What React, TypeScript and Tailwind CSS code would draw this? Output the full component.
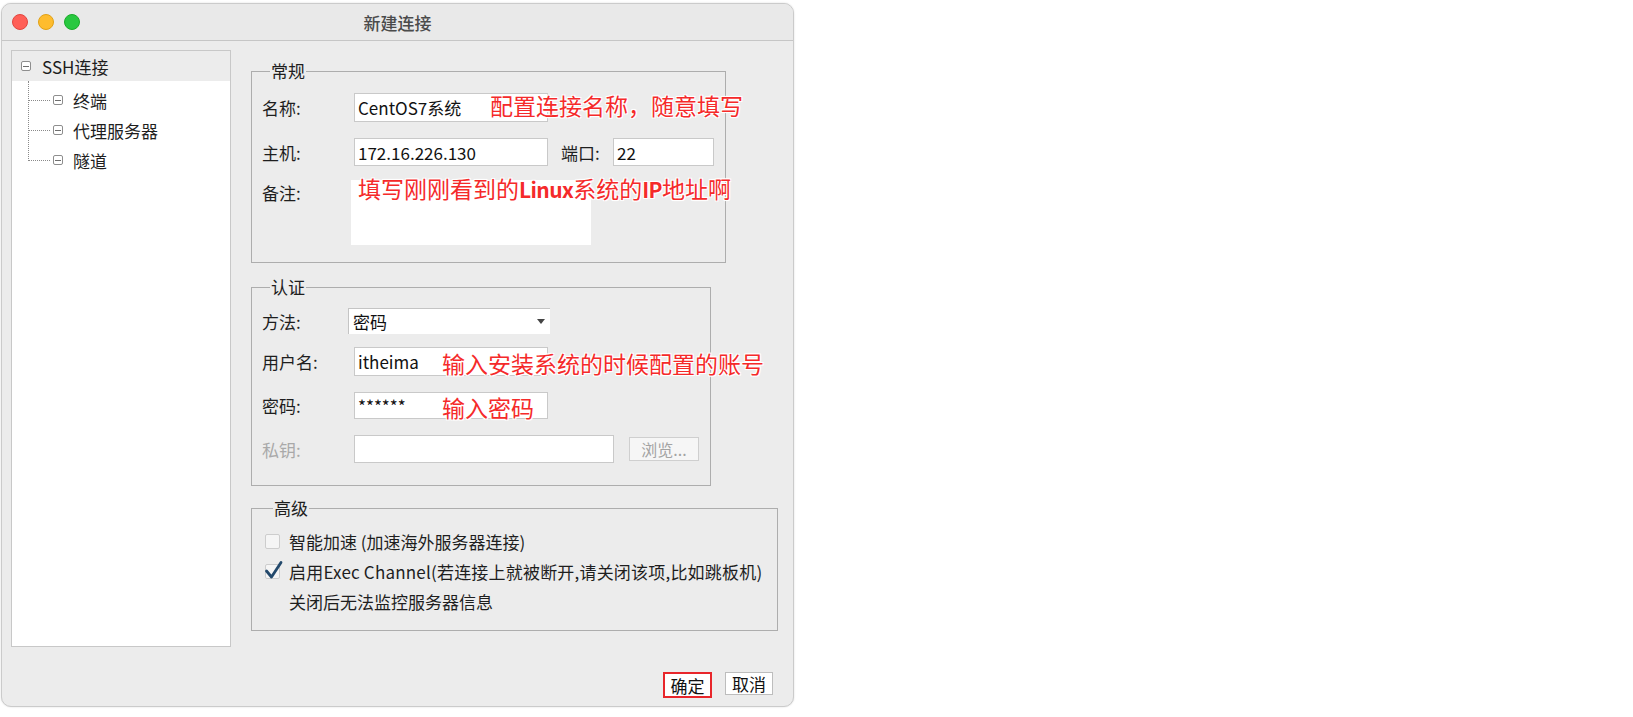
import React from 'react';

const font = "font-['Noto_Sans_CJK_SC',sans-serif]";

// red callouts written over the dialog
const note = "absolute whitespace-nowrap text-[23px] leading-[28px] text-[#f52a2a] [text-shadow:-1px_-1px_0_#fff,1px_-1px_0_#fff,-1px_1px_0_#fff,1px_1px_0_#fff,0_0_3px_#fff]";
const noteLatin = "text-[21px] font-bold tracking-[-0.6px]";

function TreeBox() {
  return (
    <span className="flex h-[10px] w-[10px] shrink-0 items-center justify-center rounded-[2px] border border-[#8e8e8e] bg-white">
      <span className="h-px w-[6px] bg-[#6e6e6e]" />
    </span>
  );
}

function TreeChild({ label }: { label: string }) {
  return (
    <div className="flex h-[30px] items-center pl-[16px]">
      <span className="w-[22px] border-t border-dotted border-[#8a8a8a]" />
      <span className="ml-[3px]">
        <TreeBox />
      </span>
      <span className="ml-[10px] text-[17px] leading-none text-[#1e1e1e]">{label}</span>
    </div>
  );
}

function Field({ value, width, height }: { value?: string; width: string; height: string }) {
  return (
    <div className={`${width} ${height} flex items-center border border-[#c9c9c9] bg-white pl-[3px] text-[17px] leading-none text-[#111]`}>
      {value}
    </div>
  );
}

function Label({ text, width = 'w-[92px]', muted }: { text: string; width?: string; muted?: boolean }) {
  return (
    <span className={`${width} shrink-0 text-[17px] leading-none ${muted ? 'text-[#a9a9a9]' : 'text-[#1e1e1e]'}`}>
      {text}
    </span>
  );
}

function Group({ title, width, children, className = '' }: { title: string; width: string; children: React.ReactNode; className?: string }) {
  return (
    <fieldset className={`${width} ${className} border border-[#adadad]`}>
      <legend className="ml-[8px] px-[1px] text-[17px] leading-[20px] text-[#1e1e1e]">{title}</legend>
      {children}
    </fieldset>
  );
}

function CheckBox({ checked }: { checked?: boolean }) {
  return (
    <span className="relative h-[15px] w-[15px] shrink-0 rounded-[2px] border border-[#cdcdcd] bg-[#f5f5f5]">
      {checked && (
        <svg className="absolute -left-[2px] -top-[5px]" width="20" height="20" viewBox="0 0 20 20">
          <path d="M2.5 11 L7.5 17 L17 2.5" fill="none" stroke="#23496c" strokeWidth="2.8" strokeLinecap="round" strokeLinejoin="round" />
        </svg>
      )}
    </span>
  );
}

export default function App() {
  return (
    <div className={`h-[717px] w-[1633px] bg-white pt-[3px] ${font}`}>
      <div className="relative ml-[1px] flex h-[704px] w-[793px] flex-col overflow-hidden rounded-[10px] border border-[#cbcbcb] bg-[#ececec] shadow-[0_0_2px_rgba(0,0,0,0.15)]">
        {/* title bar */}
        <div className="relative flex h-[37px] shrink-0 items-center justify-center border-b border-[#c6c6c6] bg-[#e9e9e9]">
          <div className="absolute left-[10px] top-[10px] flex gap-[10px]">
            <span className="h-[16px] w-[16px] rounded-full border border-[#e2463f] bg-[#ff5f57]" />
            <span className="h-[16px] w-[16px] rounded-full border border-[#e1a116] bg-[#febc2e]" />
            <span className="h-[16px] w-[16px] rounded-full border border-[#1aab29] bg-[#28c840]" />
          </div>
          <span className="text-[17px] font-medium leading-none text-[#4b4b4b]">新建连接</span>
        </div>

        {/* body */}
        <div className="flex pl-[9px] pt-[9px]">
          {/* tree */}
          <div className="h-[597px] w-[220px] shrink-0 border border-[#c8c8c8] bg-white">
            <div className="flex h-[30px] items-center bg-[#ececec] pl-[9px]">
              <TreeBox />
              <span className="ml-[11px] text-[17px] leading-none text-[#1e1e1e]">SSH连接</span>
            </div>
            <div className="relative pt-[4px]">
              <span className="absolute left-[16px] top-0 h-[80px] border-l border-dotted border-[#8a8a8a]" />
              <TreeChild label="终端" />
              <TreeChild label="代理服务器" />
              <TreeChild label="隧道" />
            </div>
          </div>

          {/* settings */}
          <div className="ml-[20px] mt-[11px] flex flex-col">
            <Group title="常规" width="w-[475px]" className="pb-[17px] pl-[10px]">
              <div className="mt-[12px] flex items-center">
                <Label text="名称:" />
                <Field value="CentOS7系统" width="w-[194px]" height="h-[29px]" />
              </div>
              <div className="mt-[16px] flex items-center">
                <Label text="主机:" />
                <Field value="172.16.226.130" width="w-[194px]" height="h-[28px]" />
                <span className="ml-[13px] w-[52px] text-[17px] leading-none text-[#1e1e1e]">端口:</span>
                <Field value="22" width="w-[101px]" height="h-[28px]" />
              </div>
              <div className="mt-[14px] flex items-start">
                <span className="w-[89px] pt-[4px] text-[17px] leading-none text-[#1e1e1e]">备注:</span>
                <div className="h-[65px] w-[240px] bg-white" />
              </div>
            </Group>

            <Group title="认证" width="w-[460px]" className="mt-[14px] pb-[22px] pl-[10px]">
              <div className="mt-[11px] flex items-center">
                <Label text="方法:" width="w-[86px]" />
                <div className="flex h-[26px] w-[202px] items-center justify-between border-l border-t border-[#c4c4c4] bg-white pl-[4px] pr-[5px] text-[17px] leading-none text-[#111]">
                  <span>密码</span>
                  <span className="h-0 w-0 border-x-[4px] border-t-[5px] border-x-transparent border-t-[#444]" />
                </div>
              </div>
              <div className="mt-[13px] flex items-center">
                <Label text="用户名:" />
                <Field value="itheima" width="w-[194px]" height="h-[29px]" />
              </div>
              <div className="mt-[16px] flex items-center">
                <Label text="密码:" />
                <Field value="******" width="w-[194px]" height="h-[27px]" />
              </div>
              <div className="mt-[16px] flex items-center">
                <Label text="私钥:" muted />
                <Field width="w-[260px]" height="h-[28px]" />
                <span className="ml-[15px] flex h-[24px] w-[70px] items-center justify-center border border-[#cfcfcf] bg-[#f6f6f6] text-[16px] leading-none text-[#a3a3a3]">
                  浏览...
                </span>
              </div>
            </Group>

            <Group title="高级" width="w-[527px]" className="mt-[12px] pb-[18px] pl-[13px]">
              <div className="mt-[12px] flex h-[22px] items-center">
                <CheckBox />
                <span className="ml-[9px] text-[17px] leading-none text-[#1e1e1e]">智能加速 (加速海外服务器连接)</span>
              </div>
              <div className="mt-[8px] flex h-[22px] items-center">
                <CheckBox checked />
                <span className="ml-[9px] text-[17px] leading-none tracking-[0.2px] text-[#1e1e1e]">
                  启用Exec Channel(若连接上就被断开,请关闭该项,比如跳板机)
                </span>
              </div>
              <div className="mt-[8px] flex h-[22px] items-center pl-[24px]">
                <span className="text-[17px] leading-none text-[#1e1e1e]">关闭后无法监控服务器信息</span>
              </div>
            </Group>
          </div>
        </div>

        {/* footer buttons */}
        <div className="mt-[25px] flex items-start justify-end gap-[13px] pr-[20px]">
          <span className="flex h-[26px] w-[49px] items-center justify-center border-2 border-[#e8262b] bg-white text-[17px] leading-none text-[#111]">
            确定
          </span>
          <span className="flex h-[23px] w-[48px] items-center justify-center border border-[#bdbdbd] bg-white text-[17px] leading-none text-[#111]">
            取消
          </span>
        </div>

        <span className={`${note} left-[488px] top-[87px]`}>配置连接名称，随意填写</span>
        <span className={`${note} left-[356px] top-[170px]`}>
          填写刚刚看到的<b className={noteLatin}>Linux</b>系统的<b className={noteLatin}>IP</b>地址啊
        </span>
        <span className={`${note} left-[440px] top-[345px]`}>输入安装系统的时候配置的账号</span>
        <span className={`${note} left-[440px] top-[389px]`}>输入密码</span>
      </div>
    </div>
  );
}
